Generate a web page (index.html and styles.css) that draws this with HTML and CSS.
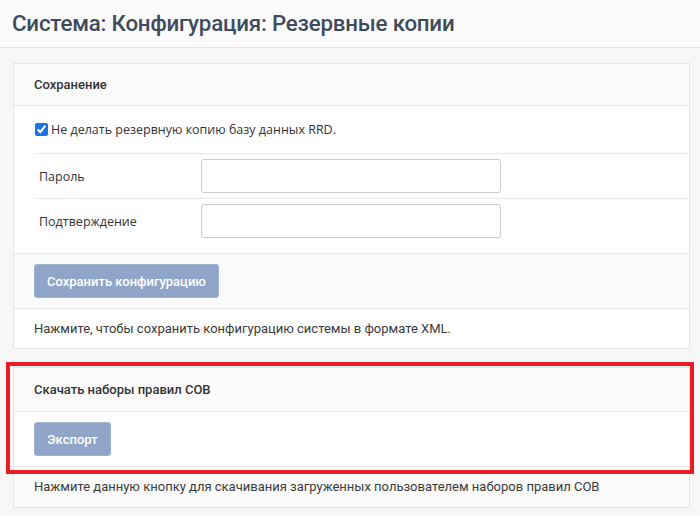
FILE: index.html
```html
<!DOCTYPE html>
<html lang="ru">
<head>
    <meta charset="utf-8">
    <title>Система: Конфигурация: Резервные копии</title>
    <link rel="stylesheet" href="styles.css">
</head>
<body>
    <header class="page-head">
        <h1>Система: Конфигурация: Резервные копии</h1>
    </header>

    <main class="content">
        <section class="card">
            <div class="card-head">Сохранение</div>
            <div class="card-body">
                <table class="opt-table">
                    <tr>
                        <td colspan="2" class="chk-cell">
                            <label><input type="checkbox" checked>Не делать резервную копию базу данных RRD.</label>
                        </td>
                    </tr>
                    <tr>
                        <td class="lbl">Пароль</td>
                        <td><input type="password" class="inp"></td>
                    </tr>
                    <tr>
                        <td class="lbl">Подтверждение</td>
                        <td><input type="password" class="inp"></td>
                    </tr>
                </table>
            </div>
            <div class="card-foot">
                <button class="btn">Сохранить конфигурацию</button>
            </div>
            <div class="card-note">Нажмите, чтобы сохранить конфигурацию системы в формате XML.</div>
        </section>

        <section class="card">
            <div class="marked">
                <div class="card-head tall">Скачать наборы правил СОВ</div>
                <div class="card-foot white">
                    <button class="btn">Экспорт</button>
                </div>
            </div>
            <div class="card-note grey">Нажмите данную кнопку для скачивания загруженных пользователем наборов правил СОВ</div>
        </section>
    </main>
</body>
</html>
```

FILE: styles.css
```css
@charset 'utf-8';
html,body,h1,table,td,button,input { margin:0; padding:0; }
body { background-color:#f7f7f7; font-family:Roboto, 'Liberation Sans', sans-serif; font-size:13px; color:#3a3a3a; }

.page-head { height:48px; background-color:#fbfbfb; border-bottom:1px solid #e6e6e6; padding-left:12px; box-sizing:border-box; }
.page-head h1 { font-size:22.3px; font-weight:500; line-height:46px; color:#3e4b5b; letter-spacing:-0.2px; }

.content { padding:15px 10px 0 13px; }

.card { background-color:#fff; border:1px solid #e5e5e5; }
.card + .card { margin-top:18px; }

.card-head { height:41px; line-height:41px; padding-left:20px; background-color:#fbfbfb; border-bottom:1px solid #e8e8e8; font-weight:500; color:#333; }
.card-head.tall { height:43px; line-height:43px; }
.card-body { padding:0 0 10px 20px; border-bottom:1px solid #e8e8e8; }

.opt-table { width:100%; border-collapse:collapse; font-family:'Open Sans', sans-serif; font-size:12.5px; color:#333; }
.opt-table td { border-top:1px solid #e8e8e8; padding:5px 0; height:33px; vertical-align:middle; }
.opt-table tr:first-child td { border-top:0; }
.opt-table .chk-cell { height:47px; padding:0; }
.opt-table .chk-cell input { width:13px; height:13px; margin:0 3px 0 1px; vertical-align:-2px; accent-color:#1a73e8; }
.opt-table .lbl { width:162px; padding-left:5px; }

.inp { width:300px; height:34px; box-sizing:border-box; border:1px solid #ccc; border-radius:3px; background:#fff; }

.card-foot { padding:10px 20px; background-color:#fafafa; border-bottom:1px solid #e8e8e8; }
.card-foot.white { background-color:#fff; }

.btn { height:34px; padding:0 12px; background-color:#8fa6c8; border:1px solid #9db2d0; border-radius:3px; color:#fff; font-family:Roboto, sans-serif; font-size:13px; font-weight:500; }

.card-note { height:39px; line-height:39px; padding-left:20px; }
.card-note.grey { background-color:#fbfbfb; height:40px; line-height:40px; }

.marked { position:relative; }
.marked::after { content:''; position:absolute; top:-6px; left:-8px; right:-5px; bottom:-7px; border:4px solid #ec1c24; }
```
